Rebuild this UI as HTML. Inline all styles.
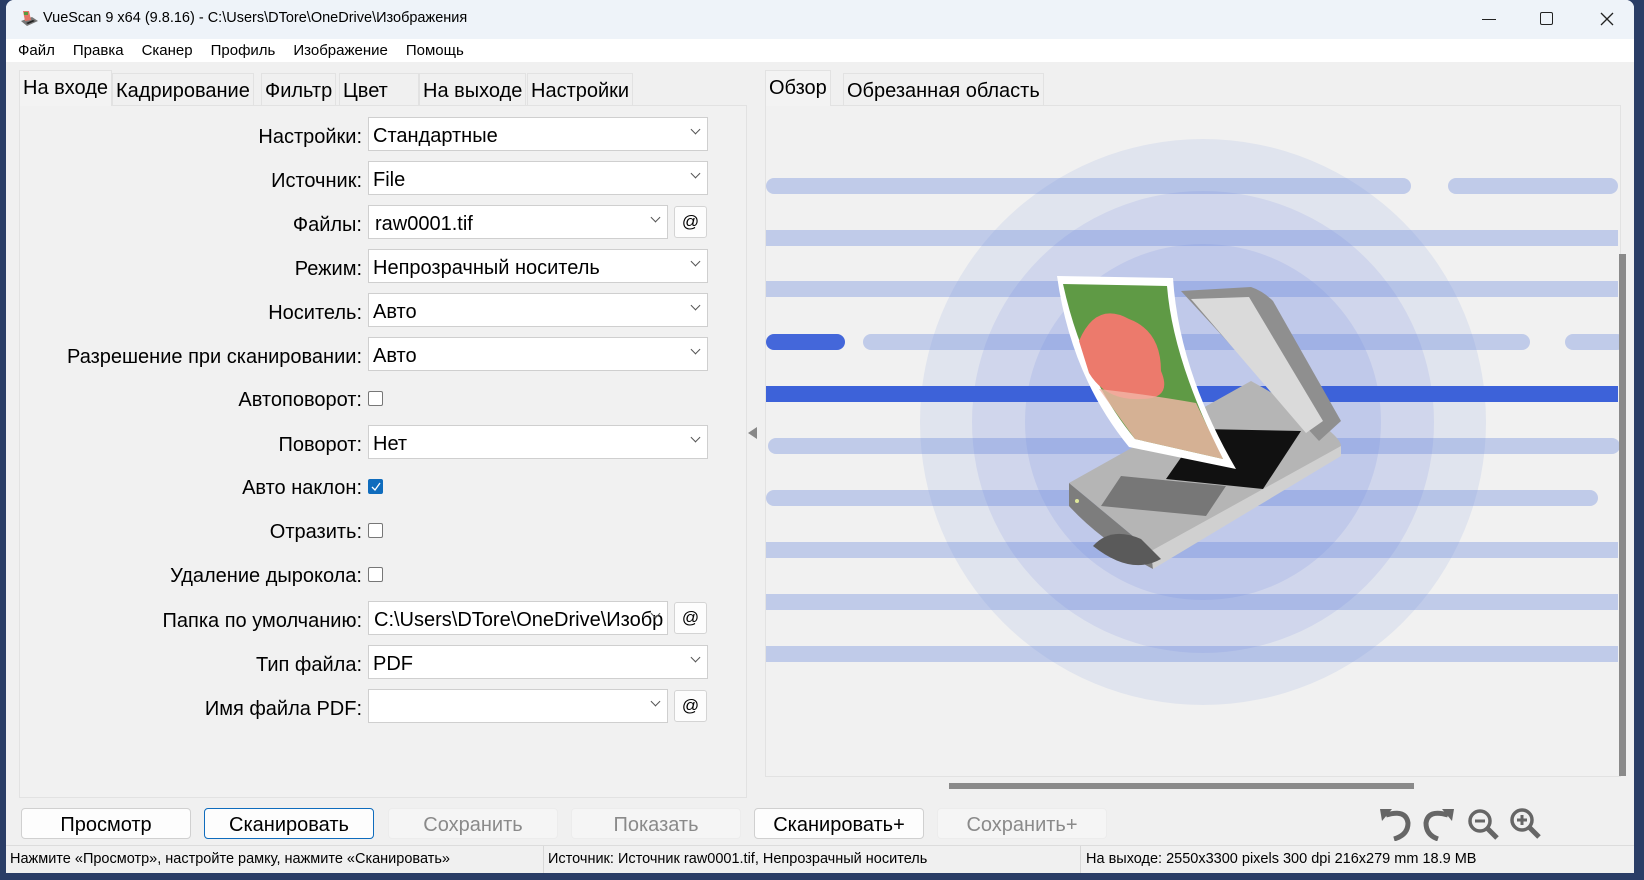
<!DOCTYPE html>
<html><head><meta charset="utf-8"><style>
*{margin:0;padding:0;box-sizing:border-box}
body{width:1644px;height:880px;overflow:hidden;background:#2a3d66;font-family:"Liberation Sans","DejaVu Sans",sans-serif;color:#000;position:relative}
.a{position:absolute}
#win{left:6px;top:0;width:1628px;height:873px;background:#f0f0f0;border-radius:8px 8px 0 0;overflow:hidden}
.lbl{position:absolute;right:1272px;font-size:20px;text-align:right;white-space:nowrap;letter-spacing:0}
.inp{position:absolute;left:362px;height:34px;background:#fff;border:1px solid #cfcfcf;font-size:20px;padding:7px 4px 3px;white-space:nowrap;overflow:hidden}
.inp .ch{position:absolute;right:8px;top:8px;width:7px;height:7px;border-right:1px solid #555;border-bottom:1px solid #555;transform:rotate(45deg)}
.at{position:absolute;left:668px;width:33px;height:32px;background:#fdfdfd;border:1px solid #d4d4d4;border-radius:3px;font-size:17px;text-align:center;line-height:30px}
.cb{position:absolute;left:362px;width:15px;height:15px;border:1px solid #777;border-radius:2px;background:#fff}
.btn{position:absolute;top:808px;height:31px;width:170px;background:#fdfdfd;border:1px solid #d0d0d0;border-radius:4px;font-size:20px;text-align:center;line-height:32px}
.dis{color:#8a8a8a;background:#f5f5f5;border-color:#ececec}
.tab{position:absolute;top:73px;height:32px;font-size:20px;padding:6px 3px 4px;background:#f0f0f0;border:1px solid #e2e2e2;border-bottom:none;white-space:nowrap}
</style></head><body>
<div id="win" class="a">
 <div class="a" style="left:0;top:0;width:1628px;height:39px;background:#eef3f9"></div>
 <svg class="a" style="left:12px;top:9px" width="22" height="20" viewBox="0 0 22 20"><path d="M3 12 L14 8 L20 12 L9 17 Z" fill="#777"/><path d="M5 2 L11 2 L13 11 L7 12 Z" fill="#e47466"/><path d="M6 3 L10 3 L10 6 L6 6Z" fill="#5a9a3c"/><path d="M8 14 L15 11 L17 12 L10 15Z" fill="#222"/></svg>
 <div class="a" style="left:37px;top:10px;font-size:14.5px">VueScan 9 x64 (9.8.16) - C:\Users\DTore\OneDrive\Изображения</div>
 <div class="a" style="left:1476px;top:19px;width:14px;height:1px;background:#222"></div>
 <div class="a" style="left:1534px;top:12px;width:13px;height:13px;border:1.3px solid #222;border-radius:2px"></div>
 <svg class="a" style="left:1594px;top:12px" width="14" height="14"><path d="M1 1L13 13M13 1L1 13" stroke="#222" stroke-width="1.3"/></svg>
 <div class="a" style="left:0;top:39px;width:1628px;height:23px;background:#fff"></div>
 <div class="a" style="left:12px;top:42px;font-size:15px"><span style="margin-right:18px">Файл</span><span style="margin-right:18px">Правка</span><span style="margin-right:18px">Сканер</span><span style="margin-right:18px">Профиль</span><span style="margin-right:18px">Изображение</span><span>Помощь</span></div>
 <div class="tab" style="left:13px;top:70px;height:36px;background:#f3f3f3;z-index:2">На входе</div>
 <div class="tab" style="left:106px">Кадрирование</div>
 <div class="tab" style="left:255px">Фильтр</div>
 <div class="tab" style="left:333px;width:80px">Цвет</div>
 <div class="tab" style="left:413px">На выходе</div>
 <div class="tab" style="left:521px">Настройки</div>
 <div class="a" style="left:13px;top:105px;width:728px;height:693px;background:#f1f1f1;border:1px solid #e2e2e2"></div>
 <div class="lbl" style="top:126px">Настройки:</div><div class="inp" style="top:117px;width:340px">Стандартные<i class="ch"></i></div>
 <div class="lbl" style="top:170px">Источник:</div><div class="inp" style="top:161px;width:340px">File<i class="ch"></i></div>
 <div class="lbl" style="top:214px">Файлы:</div><div class="inp" style="top:205px;width:300px;padding-left:6px">raw0001.tif<i class="ch"></i></div><div class="at" style="top:206px">@</div>
 <div class="lbl" style="top:258px">Режим:</div><div class="inp" style="top:249px;width:340px">Непрозрачный носитель<i class="ch"></i></div>
 <div class="lbl" style="top:302px">Носитель:</div><div class="inp" style="top:293px;width:340px">Авто<i class="ch"></i></div>
 <div class="lbl" style="top:346px">Разрешение при сканировании:</div><div class="inp" style="top:337px;width:340px">Авто<i class="ch"></i></div>
 <div class="lbl" style="top:389px">Автоповорот:</div><div class="cb" style="top:391px"></div>
 <div class="lbl" style="top:434px">Поворот:</div><div class="inp" style="top:425px;width:340px">Нет<i class="ch"></i></div>
 <div class="lbl" style="top:477px">Авто наклон:</div><div class="cb" style="top:479px;background:#0f6cbd;border-color:#0f6cbd"><svg width="13" height="13" style="position:absolute;left:0;top:0"><path d="M3 7L6 10L11 3" stroke="#fff" stroke-width="1.3" fill="none"/></svg></div>
 <div class="lbl" style="top:521px">Отразить:</div><div class="cb" style="top:523px"></div>
 <div class="lbl" style="top:565px">Удаление дырокола:</div><div class="cb" style="top:567px"></div>
 <div class="lbl" style="top:610px">Папка по умолчанию:</div><div class="inp" style="top:601px;width:300px;padding-left:5px;padding-right:24px">C:\Users\DTore\OneDrive\Изобр<i class="ch"></i></div><div class="at" style="top:602px">@</div>
 <div class="lbl" style="top:654px">Тип файла:</div><div class="inp" style="top:645px;width:340px">PDF<i class="ch"></i></div>
 <div class="lbl" style="top:698px">Имя файла PDF:</div><div class="inp" style="top:689px;width:300px"><i class="ch"></i></div><div class="at" style="top:690px">@</div>
 <div class="a" style="left:742px;top:427px;width:0;height:0;border-top:6px solid transparent;border-bottom:6px solid transparent;border-right:9px solid #888"></div>
 <div class="tab" style="left:759px;top:70px;height:36px;background:#f3f3f3;z-index:2">Обзор</div>
 <div class="tab" style="left:837px">Обрезанная область</div>
 <div class="a" style="left:759px;top:105px;width:856px;height:672px;background:#f1f1f1;border:1px solid #e2e2e2;overflow:hidden">
  <svg width="856" height="672" style="position:absolute;left:0;top:0">
   <g transform="translate(-765,-105)">
    <circle cx="1202" cy="421" r="283" fill="#6f8ae0" fill-opacity="0.12"/>
    <circle cx="1202" cy="421" r="231" fill="#6f8ae0" fill-opacity="0.14"/>
    <circle cx="1202" cy="421" r="178" fill="#6f8ae0" fill-opacity="0.16"/>
    <g fill="#5f7edb" fill-opacity="0.33">
     <rect x="765" y="177" width="645" height="16" rx="8"/><rect x="1447" y="177" width="170" height="16" rx="8"/>
     <rect x="765" y="229" width="852" height="16"/>
     <rect x="765" y="280" width="852" height="16"/>
     <rect x="862" y="333" width="667" height="16" rx="8"/><rect x="1564" y="333" width="60" height="16" rx="8"/>
     <rect x="767" y="437" width="852" height="16" rx="8"/>
     <rect x="765" y="489" width="832" height="16" rx="8"/>
     <rect x="765" y="541" width="852" height="16"/>
     <rect x="765" y="593" width="852" height="16"/>
     <rect x="765" y="645" width="852" height="16"/>
    </g>
    <rect x="765" y="333" width="79" height="16" rx="8" fill="#4467da"/>
    <rect x="765" y="385" width="852" height="16" fill="#3d62d9"/>
    <path d="M1068 482 L1250 380 Q1340 430 1340 445 L1170 550 Q1160 556 1150 550 Z" fill="#b5b5b5"/>
    <path d="M1068 482 L1150 550 L1152 568 Q1100 540 1068 505 Z" fill="#7d7d7d"/>
    <path d="M1152 568 L1340 455 L1340 445 L1150 550 Z" fill="#d0d0d0"/>
    <path d="M1092 545 Q1110 525 1140 538 L1160 558 Q1130 575 1092 545Z" fill="#5a5a5a"/>
    <circle cx="1076" cy="500" r="2" fill="#dfe89a"/>
    <path d="M1200 428 L1300 430 L1262 488 L1165 478 Z" fill="#111"/>
    <path d="M1120 475 L1225 485 L1205 515 L1100 505 Z" fill="#777"/>
    <path d="M1180 290 L1250 286 Q1262 290 1272 300 L1340 420 L1318 440 Z" fill="#8f8f8f"/>
    <path d="M1190 298 L1248 296 L1322 420 L1305 432 Z" fill="#dadada"/>
    <path d="M1056 275 L1172 277 Q1178 370 1235 468 L1128 446 Q1070 375 1056 275Z" fill="#fff"/>
    <path d="M1062 283 L1166 285 Q1172 360 1222 458 L1134 438 Q1082 375 1062 283Z" fill="#5f9a45"/>
    <path d="M1078 340 Q1095 300 1128 318 Q1160 330 1160 370 Q1172 398 1140 398 Q1105 400 1088 372 Z" fill="#ec7a6c"/>
    <path d="M1098 388 Q1150 394 1195 402 L1222 458 L1134 438 Z" fill="#f2b6a8" opacity="0.8"/>
   </g>
  </svg>
 </div>
 <div class="a" style="left:943px;top:783px;width:465px;height:6px;background:#8a8a8a"></div>
 <div class="a" style="left:1613px;top:254px;width:7px;height:522px;background:#8a8a8a"></div>
 <div class="btn" style="left:15px">Просмотр</div>
 <div class="btn" style="left:198px;border-color:#0f6cbd">Сканировать</div>
 <div class="btn dis" style="left:382px">Сохранить</div>
 <div class="btn dis" style="left:565px">Показать</div>
 <div class="btn" style="left:748px">Сканировать+</div>
 <div class="btn dis" style="left:931px">Сохранить+</div>
 <svg class="a" style="left:1370px;top:805px" width="180" height="36" viewBox="0 0 180 36">
  <g fill="none" stroke="#666" stroke-width="5">
   <path d="M10 10 Q30 4 32 18 Q32 30 18 34"/>
   <path d="M72 10 Q52 4 50 18 Q50 30 62 34"/>
   <circle cx="104" cy="16" r="10" stroke-width="3.5"/><path d="M111 23 L121 33"/>
   <circle cx="146" cy="15" r="10" stroke-width="3.5"/><path d="M153 22 L163 32"/>
  </g>
  <path d="M4 4 L16 4 L6 16Z" fill="#666"/><path d="M78 4 L66 4 L76 16Z" fill="#666"/>
  <path d="M99 16 H109" stroke="#666" stroke-width="3"/><path d="M141 15 H151 M146 10 V20" stroke="#666" stroke-width="3"/>
 </svg>
 <div class="a" style="left:0;top:845px;width:1628px;height:28px;border-top:1px solid #dcdcdc;background:#f0f0f0"></div>
 <div class="a" style="left:537px;top:846px;width:1px;height:27px;background:#d8d8d8"></div>
 <div class="a" style="left:1074px;top:846px;width:1px;height:27px;background:#d8d8d8"></div>
 <div class="a" style="left:4px;top:851px;font-size:14.5px;white-space:nowrap">Нажмите «Просмотр», настройте рамку, нажмите «Сканировать»</div>
 <div class="a" style="left:542px;top:851px;font-size:14.5px;white-space:nowrap">Источник: Источник raw0001.tif, Непрозрачный носитель</div>
 <div class="a" style="left:1080px;top:851px;font-size:14.5px;white-space:nowrap">На выходе: 2550x3300 pixels 300 dpi 216x279 mm 18.9 MB</div>
</div>
</body></html>
